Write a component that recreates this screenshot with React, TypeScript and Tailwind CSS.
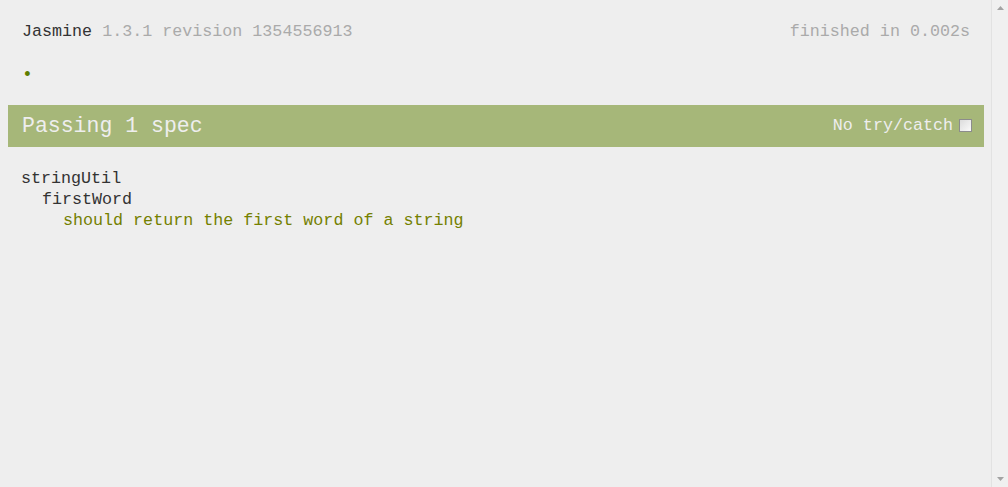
const mono = "font-['Liberation_Mono','DejaVu_Sans_Mono',monospace]";

function Scrollbar() {
  return (
    <div className="w-[17px] h-full shrink-0 flex flex-col justify-between items-center bg-[#f0f0f0] border-l border-[#e2e2e2] py-[6px]">
      <svg width="7" height="4" viewBox="0 0 7 4"><path d="M3.5 0 L7 4 L0 4 Z" fill="#a3a3a3" /></svg>
      <svg width="7" height="4" viewBox="0 0 7 4"><path d="M0 0 L7 0 L3.5 4 Z" fill="#a3a3a3" /></svg>
    </div>
  );
}

export default function App() {
  return (
    <div className={`w-full h-screen flex bg-[#eeeeee] text-[#333333] ${mono}`}>
      <div className="flex-1 pl-[8px] pr-[7px]">
        {/* Banner */}
        <div className="flex justify-between px-[14px] pt-[22px] text-[16.7px] leading-[20px]">
          <div>
            Jasmine <span className="text-[#aaaaaa]">1.3.1 revision 1354556913</span>
          </div>
          <div className="text-[#aaaaaa]">finished in 0.002s</div>
        </div>

        {/* Symbol summary */}
        <div className="px-[14px] pt-[23px] h-[63px] text-[#5e7d00] text-[18px] leading-[20px]">•</div>

        {/* Alert bar */}
        <div className="h-[42px] bg-[#a6b779] text-[#eeeeee] flex items-center justify-between pl-[14px] pr-[12px]">
          <span className="text-[21.5px] pt-[1px]">Passing 1 spec</span>
          <label className="flex items-center gap-[6px] text-[16.7px]">
            No try/catch
            <span className="w-[13px] h-[13px] border border-[#8c8c8c] bg-gradient-to-br from-[#dcdcdc] to-[#fafafa] mt-[-1px]" />
          </label>
        </div>

        {/* Results */}
        <div className="pt-[21px] pl-[13px] text-[16.7px] leading-[21px]">
          <div>stringUtil</div>
          <div className="pl-[21px]">
            <div>firstWord</div>
            <div className="pl-[21px] text-[#748000]">should return the first word of a string</div>
          </div>
        </div>
      </div>
      <Scrollbar />
    </div>
  );
}
